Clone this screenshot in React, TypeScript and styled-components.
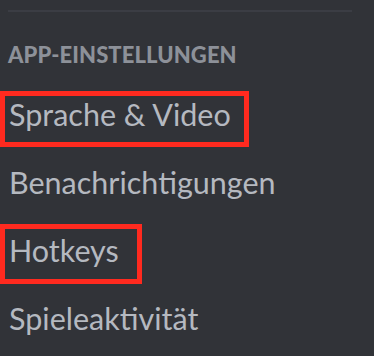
import React from 'react';
import styled, {createGlobalStyle} from 'styled-components';

const GlobalStyle = createGlobalStyle`
  html, body {
    margin: 0;
    padding: 0;
    background: #313338;
  }
  body {
    font-family: Lato, "Noto Sans", sans-serif;
  }
`;

const Sidebar = styled.nav`
  width: 374px;
  height: 356px;
  padding: 10px 22px 0 8px;
  box-sizing: border-box;
  background: #313338;
  overflow: hidden;
`;

const Divider = styled.div`
  height: 2px;
  background: #3b3d44;
  margin-bottom: 30px;
`;

const SectionHeader = styled.h2`
  margin: 0 0 12px;
  font-size: 22px;
  line-height: 26px;
  font-weight: 900;
  color: #8d9199;
  letter-spacing: 0.1px;
`;

const List = styled.ul`
  list-style: none;
  margin: 0;
  padding: 0;
`;

type Mark = {left: number; top: number; width: number; height: number};

const Item = styled.li<{$mark?: Mark}>`
  position: relative;
  height: 68px;
  line-height: 68px;
  font-size: 30.5px;
  color: #b5b9c0;
  padding-left: 1px;
  cursor: pointer;

  &::after {
    content: '';
    display: ${p => (p.$mark ? 'block' : 'none')};
    position: absolute;
    left: ${p => p.$mark?.left ?? 0}px;
    top: ${p => p.$mark?.top ?? 0}px;
    width: ${p => p.$mark?.width ?? 0}px;
    height: ${p => p.$mark?.height ?? 0}px;
    border: 5px solid #ff2a1f;
    box-sizing: border-box;
    pointer-events: none;
  }
`;

const items: {label: string; mark?: Mark}[] = [
  {label: 'Sprache & Video', mark: {left: -8, top: 11, width: 249, height: 56}},
  {label: 'Benachrichtigungen'},
  {label: 'Hotkeys', mark: {left: -8, top: 8, width: 142, height: 60}},
  {label: 'Spieleaktivität'},
];

export default function App() {
  return (
    <>
      <GlobalStyle />
      <Sidebar>
        <Divider />
        <SectionHeader>APP-EINSTELLUNGEN</SectionHeader>
        <List>
          {items.map(item => (
            <Item key={item.label} $mark={item.mark}>
              {item.label}
            </Item>
          ))}
        </List>
      </Sidebar>
    </>
  );
}
